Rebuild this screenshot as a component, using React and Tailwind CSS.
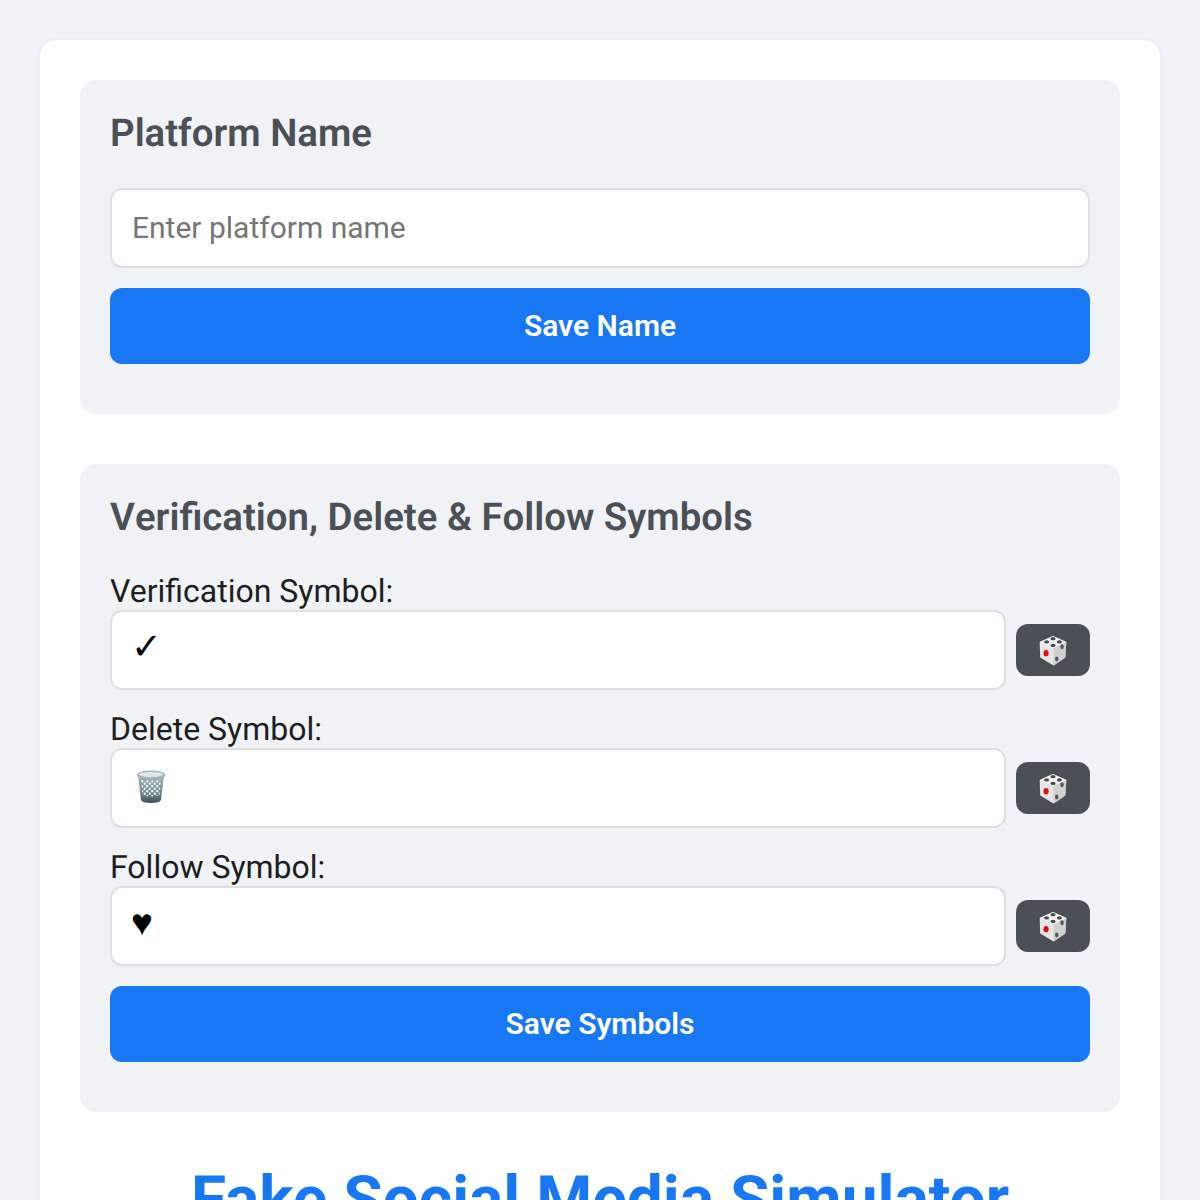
const DiceIcon = () => (
  <svg width="32" height="33" viewBox="0 0 30 30">
    <path d="M15 1.5 L27.5 7 L26.5 21.5 L15.5 29 L3 21.5 L2.5 7 Z" fill="#e6e6e6" />
    <path d="M15 1.5 L27.5 7 L15.5 13 L2.5 7 Z" fill="#f2f2f2" />
    <path d="M15.5 13 L27.5 7 L26.5 21.5 L15.5 29 Z" fill="#d0d0d0" />
    <ellipse cx="15" cy="3.9" rx="2.4" ry="1.5" fill="#4a4a4a" />
    <ellipse cx="9" cy="7" rx="2.4" ry="1.5" fill="#4a4a4a" />
    <ellipse cx="21" cy="7" rx="2.4" ry="1.5" fill="#4a4a4a" />
    <ellipse cx="15" cy="10.2" rx="2.4" ry="1.5" fill="#4a4a4a" />
    <ellipse cx="8.5" cy="17.5" rx="2.4" ry="3" fill="#e01010" />
    <ellipse cx="23.5" cy="11.5" rx="1.6" ry="2.3" fill="#555" />
    <ellipse cx="18.5" cy="23" rx="1.6" ry="2.3" fill="#555" />
  </svg>
);

const TrashIcon = () => (
  <svg width="30" height="34" viewBox="0 0 30 34">
    <defs>
      <linearGradient id="bin" x1="0" y1="0" x2="0" y2="1">
        <stop offset="0" stopColor="#9fb3bb" />
        <stop offset="0.65" stopColor="#70868f" />
        <stop offset="1" stopColor="#3f4e56" />
      </linearGradient>
      <pattern id="holes" width="5" height="5" patternUnits="userSpaceOnUse">
        <circle cx="1.25" cy="1.25" r="1.15" fill="#ffffff" />
        <circle cx="3.75" cy="3.75" r="1.15" fill="#ffffff" />
      </pattern>
    </defs>
    <path d="M2 5 L5 30 Q6 33 15 33 Q24 33 25 30 L28 5 Z" fill="url(#bin)" />
    <path d="M4.5 9 L6.5 25 Q15 28 23.5 25 L25.5 9 Q15 12 4.5 9 Z" fill="url(#holes)" />
    <ellipse cx="15" cy="5" rx="13.5" ry="3.6" fill="none" stroke="#a6b6bd" strokeWidth="1.6" />
    <ellipse cx="15" cy="5" rx="11" ry="2.2" fill="#dde3e6" />
  </svg>
);

const SymbolRow = ({ label, value, icon }) => (
  <div className="mb-5">
    <label className="block text-[32px] leading-[38px] text-[#1c1e21]">{label}</label>
    <div className="flex items-center gap-[10px]">
      <div className="relative flex-1">
        <input
          type="text"
          defaultValue={value}
          className="block w-full h-20 pl-[19px] pr-5 pb-2 bg-white border-2 border-[#dddfe2] rounded-xl text-[37px] text-black outline-none"
        />
        {icon && <div className="absolute left-[26px] top-[22px]">{icon}</div>}
      </div>
      <button type="button" className="w-[74px] h-[52px] flex items-center justify-center rounded-xl bg-[#4b4f56]">
        <DiceIcon />
      </button>
    </div>
  </div>
);

const App = () => {
  return (
    <div className="min-h-screen bg-[#f0f2f5] p-10 font-['Roboto',sans-serif] [text-rendering:geometricPrecision]">
      <div className="bg-white rounded-2xl p-10 shadow-[0_0_4px_rgba(0,0,0,0.06)]">
        <section className="bg-[#f0f2f5] rounded-2xl p-[30px] mb-[50px]">
          <h2 className="pt-px text-[38.4px] leading-[46px] font-semibold text-[#4b4f56] mb-[31px] [font-kerning:none]">Platform Name</h2>
          <input
            type="text"
            placeholder="Enter platform name"
            className="block w-full h-20 px-5 pb-0.5 mb-5 bg-white border-2 border-[#dddfe2] rounded-xl text-[30px] outline-none placeholder:text-[#757575]"
          />
          <button type="button" className="block w-full h-[76px] pb-0.5 mb-5 rounded-xl bg-[#1877f2] text-white text-[30px] font-semibold">
            Save Name
          </button>
        </section>

        <section className="bg-[#f0f2f5] rounded-2xl p-[30px] mb-[50px]">
          <h2 className="pt-px text-[38.4px] leading-[46px] font-semibold text-[#4b4f56] mb-[31px] [font-kerning:none]">Verification, Delete &amp; Follow Symbols</h2>
          <SymbolRow label="Verification Symbol:" value="✓" />
          <SymbolRow label="Delete Symbol:" value="" icon={<TrashIcon />} />
          <SymbolRow label="Follow Symbol:" value="♥" />
          <button type="button" className="block w-full h-[76px] pb-0.5 mb-5 rounded-xl bg-[#1877f2] text-white text-[30px] font-semibold">
            Save Symbols
          </button>
        </section>

        <h1 className="text-[64px] leading-[75px] font-bold text-center text-[#1877f2]">Fake Social Media Simulator</h1>
      </div>
    </div>
  );
};

export default App;
